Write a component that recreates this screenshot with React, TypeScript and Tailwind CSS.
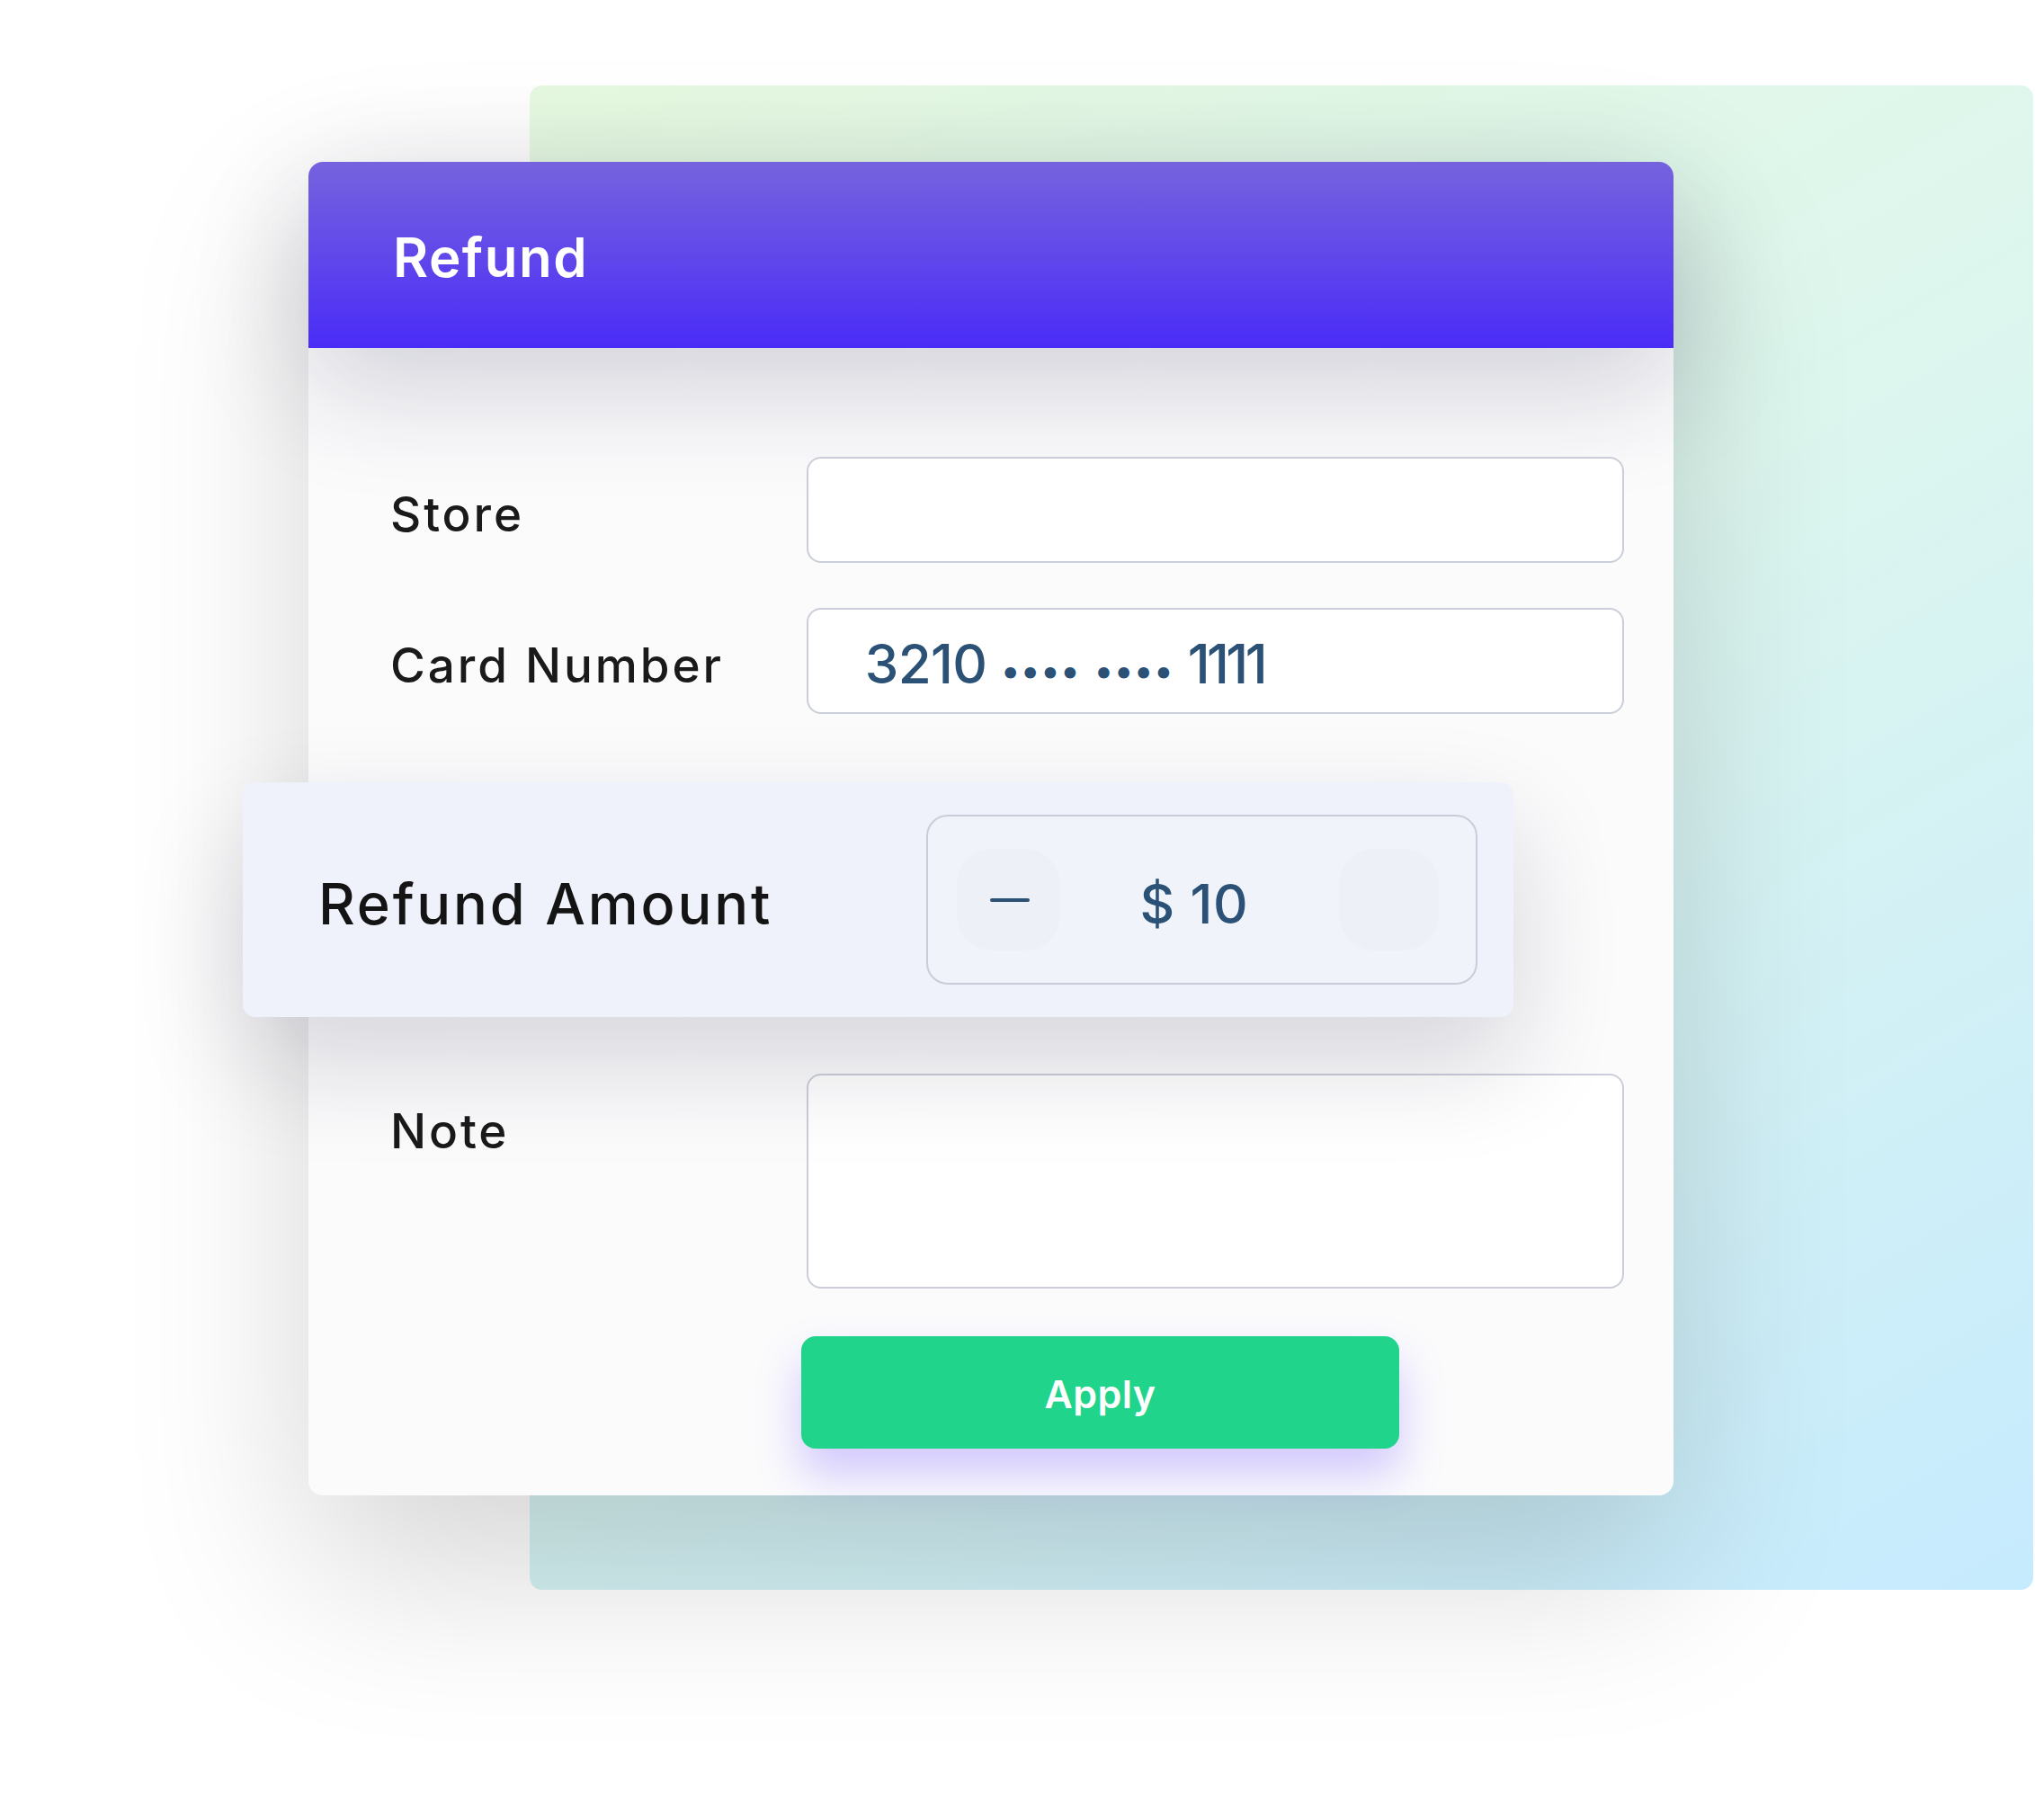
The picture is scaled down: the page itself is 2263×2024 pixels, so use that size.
export default function App() {
  return (
    <div className="grid w-[2263px] h-[2024px] overflow-hidden bg-white font-[Inter,sans-serif]">
      {/* background panel */}
      <div className="col-start-1 row-start-1 self-start justify-self-start ml-[589px] mt-[95px] w-[1672px] h-[1673px] rounded-[14px] bg-[linear-gradient(150deg,#E7FAE1_0%,#DDF6EE_45%,#C6EBFE_100%)]" />

      {/* card */}
      <div className="col-start-1 row-start-1 self-start justify-self-start relative z-10 ml-[343px] mt-[180px] w-[1518px] h-[1483px] rounded-[16px] bg-[#FBFBFC] shadow-[0_80px_200px_rgba(0,0,0,0.17)] flex flex-col">
        <div className="h-[207px] rounded-t-[16px] bg-[linear-gradient(180deg,#7563DE_0%,#4A2CF7_100%)] shadow-[0_40px_130px_rgba(30,30,70,0.2)] flex items-center pl-[94px] pt-[4px]">
          <span className="text-white text-[60px] font-semibold tracking-[0.025em] leading-none">Refund</span>
        </div>

        <div className="flex flex-col pt-[121px] pl-[91px] pr-[55px]">
          {/* Store */}
          <div className="flex items-center h-[118px]">
            <div className="w-[463px] pt-[10px] text-[53px] font-medium text-[#1A1A1A] leading-none tracking-[0.055em]">Store</div>
            <div className="w-[910px] h-[118px] rounded-[16px] border-2 border-[#CACED8] bg-white" />
          </div>

          {/* Card number */}
          <div className="flex items-center h-[118px] mt-[50px]">
            <div className="w-[463px] pt-[10px] text-[53px] font-medium text-[#1A1A1A] leading-none tracking-[0.055em]">Card Number</div>
            <div className="w-[910px] h-[118px] rounded-[16px] border-2 border-[#CACED8] bg-white flex items-center pl-[63px] pt-[6px]">
              <span className="text-[60px] font-medium text-[#2B5276] leading-none tracking-[-0.01em]">
                3210 <span className="text-[40px] tracking-[0.02em]">••••</span> <span className="text-[40px] tracking-[0.02em]">••••</span> <span className="tracking-[-0.06em]">1111</span>
              </span>
            </div>
          </div>

          {/* Refund amount overlay */}
          <div className="relative z-20 mt-[76px] -ml-[164px] w-[1413px] h-[261px] rounded-[14px] bg-[#EFF2FA] shadow-[0_50px_120px_rgba(20,20,50,0.16)] flex items-center pl-[84px]">
            <div className="pt-[10px] text-[63px] font-medium text-[#141414] leading-none tracking-[0.045em]">Refund Amount</div>
            <div className="ml-auto mr-[40px] w-[613px] h-[189px] rounded-[24px] border-2 border-[#C9CDD8] bg-[#F0F3FA] flex items-center pl-[32px] pr-[41px]">
              <div className="w-[115px] h-[113px] rounded-[40px] bg-[#EDF0F6] flex items-center justify-center">
                <div className="w-[44px] h-[4px] rounded-full bg-[#2B5276] ml-[3px]" />
              </div>
              <div className="flex-1 text-center text-[60px] font-medium text-[#2B5276] leading-none pt-[8px] -ml-[12px] tracking-[0.01em]">$ 10</div>
              <div className="w-[111px] h-[113px] rounded-[40px] bg-[#EDF0F6]" />
            </div>
          </div>

          {/* Note */}
          <div className="flex items-start mt-[63px]">
            <div className="w-[463px] h-[118px] flex items-center pt-[10px] text-[53px] font-medium text-[#1A1A1A] leading-none tracking-[0.055em]">Note</div>
            <div className="w-[910px] h-[239px] rounded-[16px] border-2 border-[#CACED8] bg-white" />
          </div>

          {/* Apply */}
          <div className="mt-[53px] ml-[457px] w-[665px] h-[125px] rounded-[16px] bg-[#21D48C] shadow-[0_28px_50px_rgba(125,95,255,0.33)] flex items-center justify-center pt-[4px]">
            <span className="text-white text-[43px] font-semibold leading-none tracking-[0.01em]">Apply</span>
          </div>
        </div>
      </div>
    </div>
  );
}
